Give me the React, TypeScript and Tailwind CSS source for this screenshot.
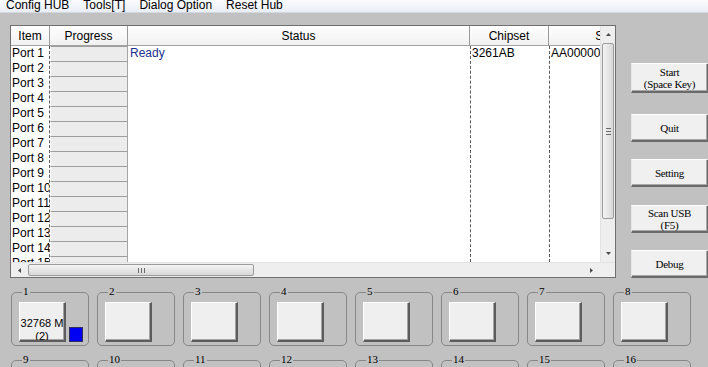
import React from "react";

const ports = Array.from({ length: 15 }, (_, i) => `Port ${i + 1}`);

function Tri({ dir }: { dir: "up" | "down" | "left" | "right" }) {
  const vertical = dir === "up" || dir === "down";
  const w = vertical ? 5 : 3;
  const h = vertical ? 3 : 5;
  const pts = {
    up: "0,3 2.5,0 5,3",
    down: "0,0 2.5,3 5,0",
    left: "3,0 0,2.5 3,5",
    right: "0,0 3,2.5 0,5",
  }[dir];
  return (
    <svg width={w} height={h} viewBox={`0 0 ${w} ${h}`}>
      <polygon points={pts} fill="#4a4a4a" />
    </svg>
  );
}

function HeaderCell({ children, className }: { children?: React.ReactNode; className: string }) {
  return (
    <div className={className}>
      <span className="whitespace-nowrap">{children}</span>
    </div>
  );
}

function List() {
  const hdr =
    "h-[20px] shrink-0 flex items-center justify-center border-b border-[#a3a3a3] bg-gradient-to-b from-white to-[#f1f1f1] text-[12px] overflow-hidden";
  return (
    <div className="w-[606px] h-[253px] shrink-0 border border-[#6f6f6f] bg-white flex flex-col">
      <div className="flex h-[236px]">
        <div className="w-[589px] h-full overflow-hidden flex text-[12px]">
          {/* Item */}
          <div className="w-[39px] shrink-0 flex flex-col">
            <HeaderCell className={hdr + " border-r border-r-[#9a9a9a]"}>Item</HeaderCell>
            <div className="flex-1 border-r border-dashed border-[#5a5a5a] overflow-hidden">
              {ports.map((p) => (
                <div key={p} className="h-[15px] leading-[15px] pl-[1px] whitespace-nowrap overflow-hidden">
                  {p}
                </div>
              ))}
            </div>
          </div>
          {/* Progress */}
          <div className="w-[78px] shrink-0 flex flex-col">
            <HeaderCell className={hdr + " border-r border-r-[#9a9a9a]"}>Progress</HeaderCell>
            <div className="flex-1 overflow-hidden">
              {ports.map((p) => (
                <div key={p} className="h-[15px]">
                  <div className="h-full bg-[#ececec] border-t border-t-[#9d9d9d] border-l border-l-[#fafafa] border-r border-r-[#a5a5a5]" />
                </div>
              ))}
            </div>
          </div>
          {/* Status */}
          <div className="w-[342px] shrink-0 flex flex-col">
            <HeaderCell className={hdr + " border-r border-r-[#9a9a9a]"}>Status</HeaderCell>
            <div className="flex-1 overflow-hidden">
              <div className="h-[15px] leading-[15px] pl-[2px] text-[#22318d]">Ready</div>
            </div>
          </div>
          {/* Chipset */}
          <div className="w-[79px] shrink-0 flex flex-col">
            <HeaderCell className={hdr + " border-r border-r-[#9a9a9a]"}>Chipset</HeaderCell>
            <div className="flex-1 border-l border-dashed border-[#5a5a5a] overflow-hidden">
              <div className="h-[15px] leading-[15px] pl-[1px]">3261AB</div>
            </div>
          </div>
          {/* SN */}
          <div className="w-[110px] shrink-0 flex flex-col">
            <HeaderCell className={hdr + " border-r border-r-[#9a9a9a]"}>SN</HeaderCell>
            <div className="flex-1 border-l border-dashed border-[#5a5a5a] overflow-hidden">
              <div className="h-[15px] leading-[15px] pl-[1px] whitespace-nowrap">AA0000000001</div>
            </div>
          </div>
        </div>
        {/* vertical scrollbar */}
        <div className="w-[15px] h-full shrink-0 flex flex-col bg-[#eeeeee] border-l border-[#e2e2e2]">
          <div className="h-[17px] shrink-0 flex items-center justify-center">
            <Tri dir="up" />
          </div>
          <div className="mx-[1px] h-[176px] shrink-0 rounded-[2px] border border-[#9b9b9b] bg-gradient-to-r from-[#f4f4f4] to-[#d8d8d8] flex flex-col items-center justify-center gap-[2px]">
            <div className="w-[5px] h-[1px] bg-[#6a6a6a]" />
            <div className="w-[5px] h-[1px] bg-[#6a6a6a]" />
            <div className="w-[5px] h-[1px] bg-[#6a6a6a]" />
          </div>
          <div className="flex-1" />
          <div className="h-[17px] shrink-0 flex items-center justify-center">
            <Tri dir="down" />
          </div>
        </div>
      </div>
      {/* horizontal scrollbar */}
      <div className="h-[15px] shrink-0 flex bg-[#eeeeee] border-t border-[#e2e2e2]">
        <div className="w-[17px] shrink-0 flex items-center justify-center">
          <Tri dir="left" />
        </div>
        <div className="w-[226px] shrink-0 my-[1px] rounded-[2px] border border-[#9b9b9b] bg-gradient-to-b from-[#f4f4f4] to-[#d8d8d8] flex items-center justify-center gap-[2px]">
          <div className="w-[1px] h-[5px] bg-[#6a6a6a]" />
          <div className="w-[1px] h-[5px] bg-[#6a6a6a]" />
          <div className="w-[1px] h-[5px] bg-[#6a6a6a]" />
        </div>
        <div className="flex-1" />
        <div className="w-[17px] shrink-0 flex items-center justify-center">
          <Tri dir="right" />
        </div>
        <div className="w-[15px] shrink-0 bg-[#efefef]" />
      </div>
    </div>
  );
}

function SideBtn({ className, children }: { className: string; children: React.ReactNode }) {
  return (
    <div
      className={
        className +
        " w-[78px] shrink-0 flex items-center justify-center text-center bg-[#f0f0f0] border-t border-l border-t-white border-l-[#e6e6e6] border-b-2 border-r-2 border-b-[#6a6a6a] border-r-[#6a6a6a] shadow-[inset_-1px_-1px_0_#a8a8a8]"
      }
    >
      <div>{children}</div>
    </div>
  );
}

function Buttons() {
  return (
    <div className="ml-[15px] shrink-0 flex flex-col font-['Liberation_Serif','Times_New_Roman',serif] text-[11px] leading-[12px] tracking-[-0.3px]">
      <SideBtn className="mt-[38px] h-[30px]">
        Start
        <br />
        (Space Key)
      </SideBtn>
      <SideBtn className="mt-[21px] h-[28px]">Quit</SideBtn>
      <SideBtn className="mt-[17px] h-[28px]">Setting</SideBtn>
      <SideBtn className="mt-[18px] h-[28px]">
        Scan USB
        <br />
        (F5)
      </SideBtn>
      <SideBtn className="mt-[17px] h-[28px]">Debug</SideBtn>
    </div>
  );
}

const portBtn =
  "w-[47px] h-[40px] shrink-0 bg-[#efefef] border-t border-l border-t-white border-l-white border-r-2 border-b-2 border-r-[#5c5c5c] border-b-[#5c5c5c] shadow-[inset_-1px_-1px_0_#a3a3a3] overflow-hidden";

function PortBox({ n }: { n: number }) {
  return (
    <div className="relative h-[54px] border border-[#878787] rounded-[5px]">
      <span className="absolute -top-[7px] left-[10px] px-[1px] bg-[#c1c1c1] font-['Liberation_Serif','Times_New_Roman',serif] text-[11px] leading-[11px]">
        {n}
      </span>
      <div className="flex items-end pl-[7px] pt-[9px]">
        {n === 1 ? (
          <>
            <div className={portBtn + " pt-[14px] text-center text-[11px] leading-[13px] whitespace-nowrap"}>
              32768 M
              <br />
              (2)
            </div>
            <div className="ml-[3px] w-[14px] h-[15px] bg-[#0000f2] border border-[#30305a]" />
          </>
        ) : (
          <div className={portBtn} />
        )}
      </div>
    </div>
  );
}

export default function App() {
  return (
    <div className="w-[708px] h-[367px] overflow-hidden bg-[#c1c1c1] font-['Liberation_Sans',Arial,sans-serif] text-black">
      <div className="h-[13px] border-b border-[#d2d9e2] bg-gradient-to-b from-[#fbfcfe] to-[#e9eef4] flex items-start pl-[6px] gap-[14px] text-[12px] leading-[12px] overflow-hidden">
        <span className="-mt-[1px] whitespace-nowrap">Config HUB</span>
        <span className="-mt-[1px] whitespace-nowrap">Tools[T]</span>
        <span className="-mt-[1px] whitespace-nowrap">Dialog Option</span>
        <span className="-mt-[1px] whitespace-nowrap">Reset Hub</span>
      </div>
      <div className="flex pt-[12px] pl-[10px]">
        <List />
        <Buttons />
      </div>
      <div className="grid grid-cols-[repeat(8,78px)] gap-x-[8px] gap-y-[14px] pl-[11px] mt-[14px]">
        {Array.from({ length: 16 }, (_, i) => (
          <PortBox key={i} n={i + 1} />
        ))}
      </div>
    </div>
  );
}
